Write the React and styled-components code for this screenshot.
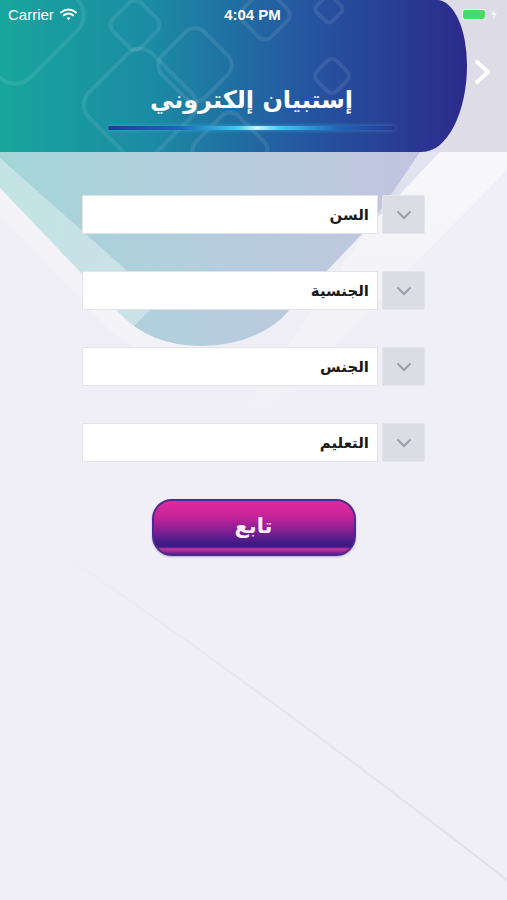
import React from "react";
import styled, { createGlobalStyle } from "styled-components";

const GlobalStyle = createGlobalStyle`
  html, body {
    margin: 0;
    padding: 0;
    background: #efeff5;
  }
  body {
    font-family: "DejaVu Sans", "Liberation Sans", sans-serif;
    overflow: hidden;
  }
`;

const Screen = styled.div`
  position: relative;
  width: 507px;
  height: 900px;
  background: #efeff5;
  overflow: hidden;
`;

const Backdrop = styled.svg`
  position: absolute;
  left: 0;
  top: 0;
  z-index: 0;
`;

const Top = styled.div`
  position: relative;
  z-index: 1;
  display: flex;
  height: 152px;
  background: linear-gradient(180deg, #dcdbe6 0%, #dedde8 100%);
`;

const HeaderShape = styled.div`
  position: relative;
  width: 467px;
  height: 152px;
  overflow: hidden;
  border-top-right-radius: 30px 65px;
  border-bottom-right-radius: 45px 87px;
  background: linear-gradient(90deg, #17a69c 0%, #1b8aa4 33%, #2555a0 66%, #2c2a8c 100%);
  display: flex;
  flex-direction: column;
  align-items: center;
  justify-content: flex-end;
  padding: 0 0 22px 36px;
  box-sizing: border-box;
`;

const Pattern = styled.svg`
  position: absolute;
  left: 0;
  top: 0;
`;

const Title = styled.h1`
  position: relative;
  margin: 0 0 12px;
  font-family: "DejaVu Sans", sans-serif;
  font-weight: bold;
  font-size: 24px;
  color: #ffffff;
  direction: rtl;
`;

const GlowBar = styled.div`
  position: relative;
  width: 287px;
  height: 4px;
  border-radius: 2px;
  background: linear-gradient(90deg, #1d3d95 0%, #1e66b8 25%, #3ccdf2 45%, #c9f4ff 52%, #3ccdf2 60%, #1e66b8 80%, #2b3592 100%);
  box-shadow: 0 0 4px rgba(80, 210, 255, 0.45);
`;

const Side = styled.div`
  flex: 1;
  display: flex;
  align-items: center;
  justify-content: center;
  padding: 0 8px 8px 0;
`;

const StatusBar = styled.div`
  position: absolute;
  left: 0;
  top: 0;
  right: 0;
  height: 28px;
  display: flex;
  align-items: center;
  padding: 0 8px;
  font-family: "Liberation Sans", Arial, sans-serif;
  font-size: 15px;
  color: #ffffff;
`;

const Carrier = styled.div`
  flex: 1;
  display: flex;
  align-items: center;
  gap: 6px;
`;

const Clock = styled.div`
  font-weight: bold;
`;

const Battery = styled.div`
  flex: 1;
  display: flex;
  justify-content: flex-end;
  align-items: center;
  gap: 6px;
  padding-right: 2px;
`;

const Cell = styled.div`
  width: 22px;
  height: 9px;
  border-radius: 2px;
  background: #4cd964;
  box-shadow: 0 0 0 1px rgba(255, 255, 255, 0.6);
`;

const Form = styled.div`
  position: relative;
  z-index: 1;
  display: flex;
  flex-direction: column;
  align-items: center;
  gap: 37px;
  padding-top: 43px;
`;

const Row = styled.div`
  display: flex;
  gap: 4px;
  width: 343px;
  height: 39px;
`;

const Field = styled.div`
  flex: 1;
  background: #ffffff;
  border: 1px solid #e3e3ea;
  display: flex;
  align-items: center;
  padding-right: 8px;
  direction: rtl;
  font-family: "DejaVu Sans", sans-serif;
  font-weight: bold;
  font-size: 15px;
  color: #1a1a1a;
`;

const Drop = styled.div`
  width: 43px;
  background: #dcdce5;
  border: 1px solid #e4e4ec;
  border-radius: 2px;
  box-sizing: border-box;
  display: flex;
  align-items: center;
  justify-content: center;
`;

const Button = styled.button`
  width: 204px;
  height: 57px;
  border-radius: 20px;
  border: 2px solid #4b2b8e;
  background: linear-gradient(180deg, #e02a9c 0%, #c6239a 30%, #7e1f92 58%, #3e1a87 80%, #3c1a86 86%, #c9339f 91%, #5d2090 100%);
  color: #fbeefa;
  font-family: "DejaVu Sans", sans-serif;
  font-weight: bold;
  font-size: 21px;
  padding-bottom: 4px;
  box-shadow: 0 1px 2px rgba(60, 30, 120, 0.3);
`;

const Chevron = () => (
  <svg width="16" height="10" viewBox="0 0 16 10">
    <path d="M1.5 1.5 L8 8 L14.5 1.5" fill="none" stroke="#9d9dab" strokeWidth="2" />
  </svg>
);

const fields = ["السن", "الجنسية", "الجنس", "التعليم"];

export default function App() {
  return (
    <Screen>
      <GlobalStyle />
      <Backdrop width="507" height="900" viewBox="0 0 507 900">
        <defs>
          <linearGradient id="vee" x1="0" y1="0" x2="1" y2="0">
            <stop offset="0" stopColor="#a3d6d7" />
            <stop offset="0.45" stopColor="#b4cede" />
            <stop offset="1" stopColor="#c3c3df" />
          </linearGradient>
          <linearGradient id="fade" x1="0" y1="0" x2="0" y2="1">
            <stop offset="0" stopColor="#ffffff" stopOpacity="0.55" />
            <stop offset="1" stopColor="#ffffff" stopOpacity="0" />
          </linearGradient>
          <linearGradient id="crease" x1="0" y1="0" x2="1" y2="1">
            <stop offset="0" stopColor="#e6e6ee" stopOpacity="0" />
            <stop offset="0.5" stopColor="#e3e3eb" stopOpacity="0.9" />
            <stop offset="1" stopColor="#e0e0e9" stopOpacity="1" />
          </linearGradient>
        </defs>
        <path d="M0 152 L440 152 L282 318 Q250 346 200 346 Q150 346 118 312 L0 188 Z" fill="url(#vee)" />
        <path d="M0 158 L0 200 L130 330 L160 300 Z" fill="#ffffff" opacity="0.35" />
        <path d="M0 188 L118 312 Q150 346 200 346 L180 360 Q130 355 100 320 L0 215 Z" fill="#f4f4f8" opacity="0.7" />
        <path d="M420 152 L507 152 L507 170 L250 430 L238 420 Z" fill="url(#fade)" />
        <path d="M20 525 Q250 680 507 880" stroke="url(#crease)" strokeWidth="2" fill="none" />
      </Backdrop>

      <Top>
        <HeaderShape>
          <Pattern width="467" height="152" viewBox="0 0 467 152">
            <g fill="none" stroke="#ffffff" strokeOpacity="0.09" strokeWidth="4">
              <rect x="95" y="60" width="90" height="90" rx="18" transform="rotate(45 140 105)" />
              <rect x="-40" y="-40" width="110" height="110" rx="22" transform="rotate(45 15 15)" />
              <rect x="165" y="35" width="60" height="60" rx="14" transform="rotate(45 195 65)" />
              <rect x="115" y="5" width="40" height="40" rx="9" transform="rotate(45 135 25)" />
              <rect x="245" y="-5" width="40" height="40" rx="9" transform="rotate(45 265 15)" />
              <rect x="318" y="62" width="28" height="28" rx="7" transform="rotate(45 332 76)" />
              <rect x="318" y="-2" width="22" height="22" rx="5" transform="rotate(45 329 9)" />
              <rect x="200" y="120" width="60" height="60" rx="12" transform="rotate(45 230 150)" />
            </g>
          </Pattern>
          <Title>إستبيان إلكتروني</Title>
          <GlowBar />
        </HeaderShape>
        <Side>
          <svg width="18" height="26" viewBox="0 0 18 26">
            <path d="M3 3 L14 13 L3 23" fill="none" stroke="#ffffff" strokeWidth="4" strokeLinecap="round" strokeLinejoin="round" />
          </svg>
        </Side>
        <StatusBar>
          <Carrier>
            Carrier
            <svg width="17" height="13" viewBox="0 0 17 13">
              <path d="M1 4.5 Q8.5 -1.5 16 4.5" fill="none" stroke="#fff" strokeWidth="2" strokeLinecap="round" />
              <path d="M3.8 7.3 Q8.5 3.6 13.2 7.3" fill="none" stroke="#fff" strokeWidth="2" strokeLinecap="round" />
              <path d="M6.5 10 L8.5 12.3 L10.5 10 Q8.5 8.5 6.5 10 Z" fill="#fff" />
            </svg>
          </Carrier>
          <Clock>4:04 PM</Clock>
          <Battery>
            <Cell />
            <svg width="6" height="10" viewBox="0 0 6 10">
              <path d="M4 0 L0 6 L3 6 L2 10 L6 4 L3 4 Z" fill="#ffffff" opacity="0.8" />
            </svg>
          </Battery>
        </StatusBar>
      </Top>

      <Form>
        {fields.map((f) => (
          <Row key={f}>
            <Field>{f}</Field>
            <Drop>
              <Chevron />
            </Drop>
          </Row>
        ))}
        <Button>تابع</Button>
      </Form>
    </Screen>
  );
}
